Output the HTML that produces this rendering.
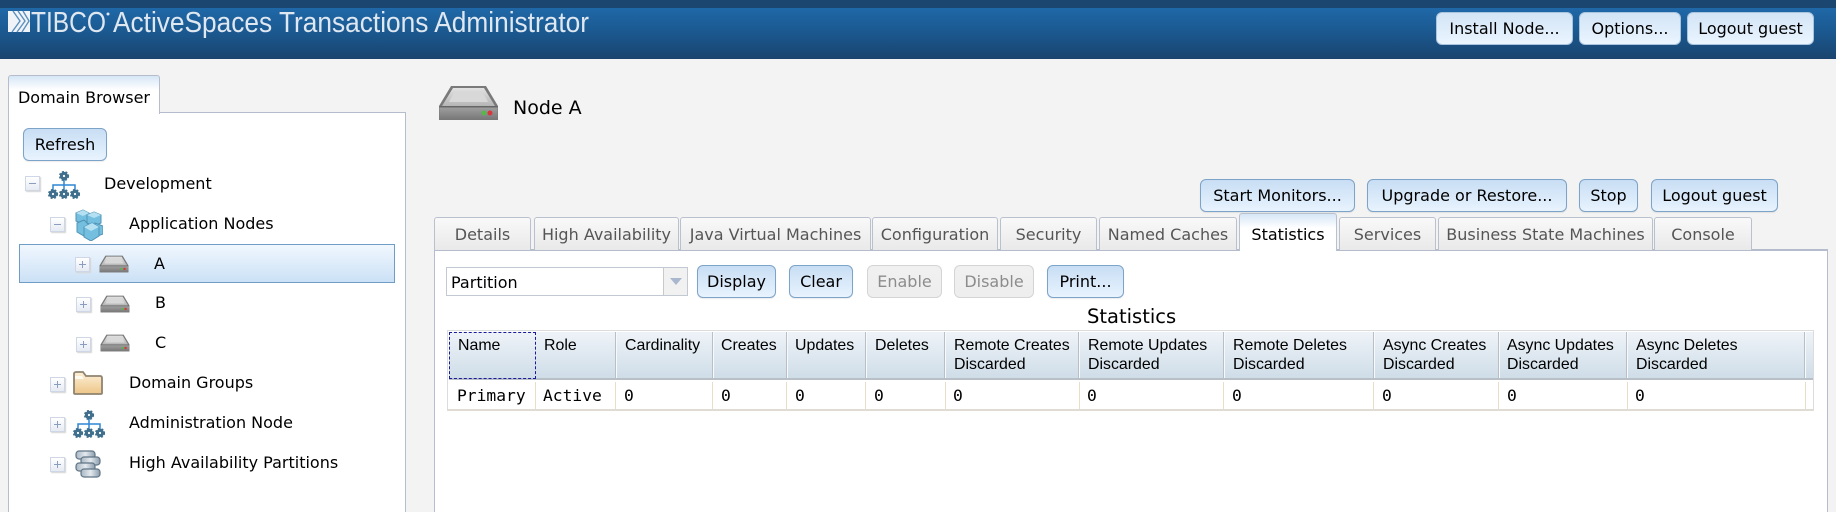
<!DOCTYPE html>
<html><head><meta charset="utf-8"><title>TIBCO ActiveSpaces Transactions Administrator</title>
<style>
html,body{margin:0;padding:0}
body{width:1836px;height:512px;overflow:hidden;position:relative;background:#f3f3f3;font-family:"DejaVu Sans",sans-serif;color:#000}
div,svg,span{position:absolute;box-sizing:border-box}
.hdr{left:0;top:0;width:1836px;height:59px;background:linear-gradient(#1f68a8 8px,#1b5a92 30px,#1a446e 59px)}
.hdr0{left:0;top:0;width:1836px;height:8px;background:#1b466f}
.b{height:33px;border:1px solid #7ca3c8;border-radius:6px;background:linear-gradient(#c8def4,#e8f3fe);font-size:16px;line-height:31px;text-align:center;white-space:nowrap;color:#000;box-shadow:0 1px 1px rgba(0,0,0,.08)}
.h{border-color:#a9c4de;background:linear-gradient(#d3e4f6,#eaf5ff);box-shadow:none;line-height:32px}
.d{border-color:#d4d4d4;background:linear-gradient(#f0f0f0,#eeeeee);color:#8c8c8c;box-shadow:none}
.r{line-height:32px}
.tab{top:217px;height:33px;border:1px solid #b9c1cf;border-bottom:none;border-radius:3px 3px 0 0;background:linear-gradient(#f9f9f9,#e9e9e9);font-size:16px;line-height:34px;text-align:center;color:#555;white-space:nowrap}
.t{font-size:16px;line-height:20px;white-space:nowrap;color:#000}
.pm{width:15px;height:15px;background:linear-gradient(#fff,#e6ebf3);border:1px solid #cfd7e6;box-shadow:1px 1px 1px #d5d5d5}
.pm:before{content:"";position:absolute;left:3px;top:6px;width:7px;height:1px;background:#8b9dc0}
.pl:after{content:"";position:absolute;left:6px;top:3px;width:1px;height:7px;background:#8b9dc0}
.hc{top:336px;font-family:"Liberation Sans",sans-serif;font-size:15.9px;line-height:19px;color:#000;white-space:nowrap}
.sep{top:332px;width:2px;height:46px;background:#f7f9fb;border-left:1px solid #b9bfc6}
.cs{top:382px;width:1px;height:27px;background:#e9dcc9}
.m{top:386px;font-family:"DejaVu Sans Mono",monospace;font-size:16.3px;line-height:20px;white-space:nowrap}
</style></head><body>
<svg width="0" height="0" style="left:0;top:0"><defs>
<linearGradient id="dt" x1="0" y1="0" x2="0" y2="1"><stop offset="0" stop-color="#e2e2e2"/><stop offset="1" stop-color="#b5b5b5"/></linearGradient>
<linearGradient id="df" x1="0" y1="0" x2="0" y2="1"><stop offset="0" stop-color="#a3a3a3"/><stop offset="1" stop-color="#767676"/></linearGradient>
<linearGradient id="fo" x1="0" y1="0" x2="0" y2="1"><stop offset="0" stop-color="#fdf0d8"/><stop offset="1" stop-color="#eec588"/></linearGradient>
<linearGradient id="cy" x1="0" y1="0" x2="1" y2="0"><stop offset="0" stop-color="#a8b6c2"/><stop offset=".5" stop-color="#e4eaef"/><stop offset="1" stop-color="#8d9dab"/></linearGradient>
<symbol id="drive" viewBox="0 0 61 36"><path d="M13 1H48L60 21V35H1V21Z" fill="#7a7a7a"/><path d="M15 3H46L57 21H4Z" fill="url(#dt)"/><path d="M17 6H44L50 17H11Z" fill="#d8d8d8"/><rect x="1.500" y="21" width="58" height="14" fill="url(#df)"/><rect x="1.500" y="21" width="58" height="1.500" fill="#666"/><circle cx="46" cy="28" r="2.500" fill="#57b84a"/><circle cx="52" cy="28" r="2.500" fill="#d8353d"/></symbol>
<symbol id="org" viewBox="0 0 32 28"><path d="M16 8V14M5 21V14H27V21M16 14V21" fill="none" stroke="#2f86d6" stroke-width="1.500"/><g fill="none" stroke="#3f6f8c"><g stroke-width="3"><circle cx="16" cy="5" r="2.600"/><circle cx="5" cy="23" r="2.600"/><circle cx="16" cy="23" r="2.600"/><circle cx="27" cy="23" r="2.600"/></g><g stroke-width="1.400" stroke-dasharray="2 1.700"><circle cx="16" cy="5" r="4.400"/><circle cx="5" cy="23" r="4.400"/><circle cx="16" cy="23" r="4.400"/><circle cx="27" cy="23" r="4.400"/></g></g></symbol>
<symbol id="cube" viewBox="0 0 28 32"><g stroke="#4f93b5" stroke-width="1" fill="#74bfe0"><path d="M1 4L8 1L14 4V12L8 15L1 12Z"/><path d="M12 6L19 3L26 6V14L19 17L12 14Z"/><path d="M2 14L9 11L13 15V25L9 27L2 23Z"/><path d="M20 14L28 17V25L20 28Z"/><path d="M9 18L17 14L24 18V27L16 32L9 28Z"/></g><path d="M1 4L8 7L14 4L8 1ZM12 6L19 9L26 6L19 3ZM9 18L16 22L24 18L17 14Z" fill="#b4e0f2"/></symbol>
<symbol id="fold" viewBox="0 0 30 24"><path d="M1 3Q1 1 3 1H10L13 5H27Q29 5 29 7V22Q29 23 28 23H2Q1 23 1 22Z" fill="url(#fo)" stroke="#8f8371" stroke-width="1.800"/><path d="M2 5H9L11 8H2Z" fill="#fffaf0"/></symbol>
<symbol id="db" viewBox="0 0 26 28"><g stroke="#5f7587" stroke-width="1.200" fill="url(#cy)"><rect x="1" y="1" width="19" height="8" rx="3"/><rect x="6" y="7" width="19" height="8" rx="3"/><rect x="1" y="13" width="19" height="8" rx="3"/><rect x="6" y="19" width="19" height="8" rx="3"/></g></symbol>
</defs></svg>

<div class="hdr"></div><div class="hdr0"></div>
<svg style="left:0;top:0" width="620" height="59" viewBox="0 0 620 59">
<rect x="8" y="11" width="22" height="21" fill="#f0f4f9"/>
<path d="M13 11L20 21L12 32M18 11L25 21L17 32M23 11L29 21L22 32" fill="none" stroke="#5d90bd" stroke-width="1.400"/>
<text x="31" y="32" font-family="'Liberation Sans',sans-serif" font-size="29" fill="#dfe7f0" textLength="75" lengthAdjust="spacingAndGlyphs">TIBCO</text>
<circle cx="108" cy="14" r="1.500" fill="#dfe7f0"/>
<text x="113" y="32" font-family="'Liberation Sans',sans-serif" font-size="29" fill="#dfe7f0" textLength="476" lengthAdjust="spacingAndGlyphs">ActiveSpaces Transactions Administrator</text>
</svg>
<div class="b h" style="left:1436px;top:12px;width:137px">Install Node...</div>
<div class="b h" style="left:1579px;top:12px;width:102px">Options...</div>
<div class="b h" style="left:1687px;top:12px;width:127px">Logout guest</div>

<!-- left panel -->
<div style="left:8px;top:112px;width:398px;height:400px;background:#fff;border:1px solid #b5bdcc;border-bottom:none"></div>
<div style="left:8px;top:75px;width:152px;height:39px;background:linear-gradient(#d6e6f6,#fff 14px);border:1px solid #b5bdcc;border-bottom:none;border-radius:3px 3px 0 0;font-size:16px;line-height:44px;text-align:center;white-space:nowrap">Domain Browser</div>
<div class="b" style="left:23px;top:128px;width:84px">Refresh</div>

<div class="pm" style="left:25px;top:176px"></div>
<svg style="left:48px;top:171px" width="32" height="28"><use href="#org"/></svg>
<div class="t" style="left:104px;top:174px">Development</div>

<div class="pm" style="left:50px;top:217px"></div>
<svg style="left:75px;top:209px" width="28" height="32"><use href="#cube"/></svg>
<div class="t" style="left:129px;top:214px">Application Nodes</div>

<div style="left:19px;top:244px;width:376px;height:39px;background:linear-gradient(#f1f7fe,#cce1f6);border:1px solid #6f9dc5"></div>
<div class="pm pl" style="left:75px;top:257px"></div>
<svg style="left:99px;top:255px" width="30" height="18"><use href="#drive"/></svg>
<div class="t" style="left:154px;top:254px">A</div>

<div class="pm pl" style="left:76px;top:297px"></div>
<svg style="left:100px;top:295px" width="30" height="18"><use href="#drive"/></svg>
<div class="t" style="left:155px;top:293px">B</div>

<div class="pm pl" style="left:76px;top:337px"></div>
<svg style="left:100px;top:334px" width="30" height="18"><use href="#drive"/></svg>
<div class="t" style="left:155px;top:333px">C</div>

<div class="pm pl" style="left:50px;top:377px"></div>
<svg style="left:73px;top:371px" width="30" height="24"><use href="#fold"/></svg>
<div class="t" style="left:129px;top:373px">Domain Groups</div>

<div class="pm pl" style="left:50px;top:417px"></div>
<svg style="left:73px;top:410px" width="32" height="28"><use href="#org"/></svg>
<div class="t" style="left:129px;top:413px">Administration Node</div>

<div class="pm pl" style="left:50px;top:457px"></div>
<svg style="left:75px;top:450px" width="26" height="28"><use href="#db"/></svg>
<div class="t" style="left:129px;top:453px">High Availability Partitions</div>

<!-- right -->
<svg style="left:438px;top:85px" width="61" height="36"><use href="#drive"/></svg>
<div style="left:513px;top:96px;font-size:19px;line-height:24px;white-space:nowrap">Node A</div>

<div class="b" style="left:1200px;top:179px;width:155px">Start Monitors...</div>
<div class="b" style="left:1367px;top:179px;width:200px">Upgrade or Restore...</div>
<div class="b" style="left:1579px;top:179px;width:59px">Stop</div>
<div class="b" style="left:1651px;top:179px;width:127px">Logout guest</div>

<div style="left:434px;top:249px;width:1394px;height:263px;background:#fff;border:1px solid #b5bdcc;border-bottom:none;border-top-width:2px"></div>
<div class="tab" style="left:434px;width:97px">Details</div>
<div class="tab" style="left:534px;width:145px">High Availability</div>
<div class="tab" style="left:680px;width:191px">Java Virtual Machines</div>
<div class="tab" style="left:872px;width:126px">Configuration</div>
<div class="tab" style="left:1000px;width:97px">Security</div>
<div class="tab" style="left:1099px;width:138px">Named Caches</div>
<div class="tab" style="left:1239px;top:213px;width:98px;height:38px;line-height:42px;color:#000;background:linear-gradient(#d6e6f6,#fff 14px)">Statistics</div>
<div class="tab" style="left:1339px;width:97px">Services</div>
<div class="tab" style="left:1438px;width:215px">Business State Machines</div>
<div class="tab" style="left:1654px;width:98px">Console</div>

<div style="left:446px;top:267px;width:242px;height:29px;background:#fff;border:1px solid #c3c9d3;font-size:16px;line-height:29px;padding-left:4px">Partition</div>
<div style="left:663px;top:268px;width:24px;height:27px;background:#f1f1f1;border-left:1px solid #c9c9c9"></div>
<svg style="left:669px;top:278px" width="14" height="8"><path d="M1 0H13L7 7Z" fill="#a9b7cf"/></svg>
<div class="b r" style="left:697px;top:265px;width:79px">Display</div>
<div class="b r" style="left:789px;top:265px;width:64px">Clear</div>
<div class="b d r" style="left:867px;top:265px;width:75px">Enable</div>
<div class="b d r" style="left:954px;top:265px;width:80px">Disable</div>
<div class="b r" style="left:1047px;top:265px;width:77px">Print...</div>
<div style="left:1087px;top:304px;font-size:19.500px;line-height:26px;white-space:nowrap">Statistics</div>

<!-- table -->
<div style="left:447px;top:330px;width:1367px;height:81px;background:#fff;border:1px solid #dcdcdc;border-bottom:2px solid #e0dcd4"></div>
<div style="left:449px;top:332px;width:1364px;height:46px;background:linear-gradient(#eef3f8,#cfdde8)"></div>
<div style="left:449px;top:378px;width:1364px;height:2px;background:#b9bfc6"></div>
<div style="left:449px;top:332px;width:87px;height:47px;border:1px dashed #1a1a9c"></div>
<div class="sep" style="left:615px"></div><div class="sep" style="left:712px"></div><div class="sep" style="left:786px"></div><div class="sep" style="left:865px"></div><div class="sep" style="left:944px"></div><div class="sep" style="left:1078px"></div><div class="sep" style="left:1223px"></div><div class="sep" style="left:1373px"></div><div class="sep" style="left:1498px"></div><div class="sep" style="left:1626px"></div><div class="sep" style="left:1804px"></div>
<div class="hc" style="left:458px">Name</div>
<div class="hc" style="left:544px">Role</div>
<div class="hc" style="left:625px">Cardinality</div>
<div class="hc" style="left:721px">Creates</div>
<div class="hc" style="left:795px">Updates</div>
<div class="hc" style="left:875px">Deletes</div>
<div class="hc" style="left:954px">Remote Creates<br>Discarded</div>
<div class="hc" style="left:1088px">Remote Updates<br>Discarded</div>
<div class="hc" style="left:1233px">Remote Deletes<br>Discarded</div>
<div class="hc" style="left:1383px">Async Creates<br>Discarded</div>
<div class="hc" style="left:1507px">Async Updates<br>Discarded</div>
<div class="hc" style="left:1636px">Async Deletes<br>Discarded</div>
<div class="cs" style="left:535px"></div><div class="cs" style="left:615px"></div><div class="cs" style="left:712px"></div><div class="cs" style="left:786px"></div><div class="cs" style="left:865px"></div><div class="cs" style="left:945px"></div><div class="cs" style="left:1079px"></div><div class="cs" style="left:1223px"></div><div class="cs" style="left:1373px"></div><div class="cs" style="left:1498px"></div><div class="cs" style="left:1627px"></div><div class="cs" style="left:1805px"></div>
<div class="m" style="left:457px">Primary</div>
<div class="m" style="left:543px">Active</div>
<div class="m" style="left:624px">0</div>
<div class="m" style="left:721px">0</div>
<div class="m" style="left:795px">0</div>
<div class="m" style="left:874px">0</div>
<div class="m" style="left:953px">0</div>
<div class="m" style="left:1087px">0</div>
<div class="m" style="left:1232px">0</div>
<div class="m" style="left:1382px">0</div>
<div class="m" style="left:1507px">0</div>
<div class="m" style="left:1635px">0</div>
</body></html>
